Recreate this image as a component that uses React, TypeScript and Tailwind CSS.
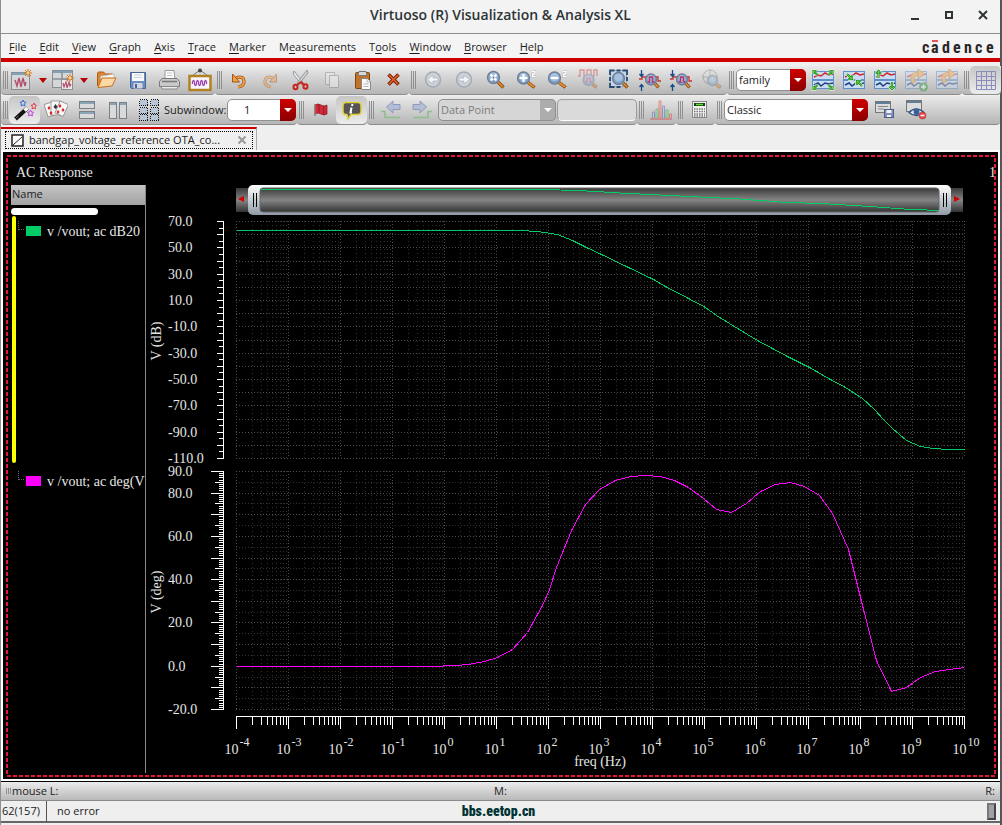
import type { ReactNode } from "react";

/* ---------- data ---------- */

const MENUS = [
  ["", "F", "ile"],
  ["", "E", "dit"],
  ["", "V", "iew"],
  ["", "G", "raph"],
  ["", "A", "xis"],
  ["", "T", "race"],
  ["", "M", "arker"],
  ["M", "e", "asurements"],
  ["T", "o", "ols"],
  ["", "W", "indow"],
  ["", "B", "rowser"],
  ["", "H", "elp"],
];

// [log10(freq), value]
const GAIN_DB = [
  [-4, 63.2], [1.45, 63.2], [1.78, 62.4], [2.17, 59.9], [2.46, 55.6], [2.74, 50.3], [3.01, 44.9],
  [4.01, 25.7], [4.25, 20.4], [4.7, 11.3], [5.02, 4.4], [5.24, -1.1], [5.48, -7.5], [5.82, -16.1],
  [6.01, -20.4], [6.3, -26.7], [6.59, -32.3], [7.01, -40.9], [7.42, -49.7], [7.71, -55.8],
  [8.03, -64.4], [8.26, -72.8], [8.45, -80.4], [8.62, -87.5], [8.88, -96.3], [9.15, -100.9],
  [9.4, -102.4], [9.7, -102.9], [10, -103.2],
];

const PHASE_DEG = [
  [-4, -0.3], [-0.27, -0.1], [0.23, 0.3], [0.46, 0.9], [0.76, 2], [1.02, 4], [1.31, 7.9], [1.6, 15.6],
  [1.88, 28.2], [2.01, 35.6], [2.16, 45.5], [2.44, 62.6], [2.71, 74.7], [2.99, 81.7], [3.28, 85.7],
  [3.57, 87.5], [3.87, 88], [4.15, 87.5], [4.42, 86], [4.69, 82.8], [4.98, 77.5], [5.24, 72.4],
  [5.52, 70.9], [5.81, 75.1], [6.08, 80.8], [6.36, 84], [6.65, 84.8], [6.92, 83.2], [7.21, 78.8],
  [7.47, 70.4], [7.77, 53.9], [8.04, 27.9], [8.31, 2.8], [8.6, -11.8], [8.88, -10], [9.16, -5.1],
  [9.44, -2.4], [9.72, -1.4], [10, -0.8],
];

/* ---------- icons ---------- */

const Svg = ({ children, faded, size = 24 }: { children: ReactNode; faded?: boolean; size?: number }) => (
  <svg width={size} height={size} viewBox="0 0 24 24" fill="none" className={faded ? "opacity-45" : ""}>
    {children}
  </svg>
);

const Spark = ({ x, y }: { x: number; y: number }) => (
  <g stroke="#d9751c" strokeWidth="1">
    <path d={`M${x - 4} ${y}h8M${x} ${y - 4}v8M${x - 3} ${y - 3}l6 6M${x + 3} ${y - 3}l-6 6`} />
    <circle cx={x} cy={y} r="1.5" fill="#ffd27a" stroke="none" />
  </g>
);

const NewWindowIcon = () => (
  <Svg>
    <rect x="1.5" y="4.5" width="18" height="17" fill="#d4d6d8" stroke="#8b8f94" />
    <path d="M2 6h17" stroke="#7fa3bd" strokeWidth="2" />
    <path d="M5 12l2 6 2-8 2 9 2-9 2 8 1-4" stroke="#b4506e" strokeWidth="1.4" />
    <Spark x={18} y={5} />
  </Svg>
);

const NewSubwindowIcon = () => (
  <Svg>
    <rect x="1.5" y="2.5" width="20" height="17" fill="#d4d6d8" stroke="#8b8f94" />
    <path d="M2 4h19" stroke="#7fa3bd" strokeWidth="2" />
    <path d="M2 11h19M11 4v15" stroke="#8b8f94" strokeWidth="1.5" />
    <rect x="10.5" y="11.5" width="11" height="10" fill="#ececec" stroke="#8b8f94" />
    <path d="M12 15l1 4 2-5 1 6 2-6 1 4 1-2" stroke="#b4506e" strokeWidth="1.2" />
    <Spark x={19} y={10} />
  </Svg>
);

const FolderIcon = () => (
  <Svg>
    <path d="M2.500 18V5l1-1h5l2 2h7v4" fill="#d98636" stroke="#b85c0c" />
    <path d="M6 8l13-2v5H5z" fill="#f6f6f6" stroke="#aaa" strokeWidth=".6" />
    <path d="M3 19.500l4-9.500h14l-4 8z" fill="#fbd9a4" stroke="#c76f1c" />
  </Svg>
);

const FloppyIcon = () => (
  <Svg>
    <path d="M4.500 4.500h15v16h-14l-1-1z" fill="#6b8cc0" stroke="#47659a" />
    <rect x="6" y="5" width="12" height="8" fill="#f7f8fa" />
    <path d="M8 7h8M8 9.500h8" stroke="#c4cad4" strokeWidth=".8" />
    <rect x="7.500" y="15" width="9" height="5.500" fill="#d2d6dc" />
    <rect x="9" y="16" width="2" height="4" fill="#47659a" />
  </Svg>
);

const PrinterIcon = () => (
  <Svg>
    <path d="M8 12V2.500h9l1 9.500" fill="#fafafa" stroke="#9a9a9a" />
    <path d="M10 5h5M10 7.500h5" stroke="#c5c5c5" />
    <path d="M5 10.500h15l2.500 3v5h-20v-5z" fill="#c9c9c9" stroke="#777" />
    <path d="M5 13.500h15" stroke="#777" strokeWidth="1.500" />
    <path d="M4 18.500h17l-1 2.500H5z" fill="#ececec" stroke="#888" />
  </Svg>
);

const FrameIcon = () => (
  <Svg>
    <path d="M4 8l8-6 8 6" stroke="#66717b" />
    <circle cx="12" cy="2.500" r="2" fill="#444" />
    <rect x="1.500" y="8" width="21" height="14" fill="#f7f4ff" stroke="#b08224" strokeWidth="2.500" />
    <path d="M4.500 16v-2q1-3 2 0v2q1 3 2 0v-2q1-3 2 0v2q1 3 2 0v-2q1-3 2 0v2q1 3 2 0v-2q1-3 2 0v2" stroke="#9b45b0" strokeWidth="1.300" />
  </Svg>
);

const UndoIcon = ({ flip }: { flip?: boolean }) => (
  <Svg faded={flip}>
    <g transform={flip ? "matrix(-1 0 0 1 24 0)" : undefined}>
      <path d="M9 10q8-3 8 4 0 4-6 5" stroke="#a85313" strokeWidth="3.200" />
      <path d="M9 10q8-3 8 4 0 4-6 5" stroke="#f0a04b" strokeWidth="1.800" />
      <path d="M5.500 6v8h7z" fill="#f0a04b" stroke="#a85313" />
    </g>
  </Svg>
);

const ScissorsIcon = () => (
  <Svg>
    <path d="M5 3l10 13-2 1L4 6z" fill="#e6e9ec" stroke="#84898e" strokeWidth=".8" />
    <path d="M18 2L8 15l2 1 9-11z" fill="#cdd1d5" stroke="#84898e" strokeWidth=".8" />
    <ellipse cx="6.500" cy="19" rx="2" ry="2.300" stroke="#c9251f" strokeWidth="2" />
    <ellipse cx="16.500" cy="18.500" rx="2" ry="2.300" stroke="#c9251f" strokeWidth="2" />
    <path d="M8 17l4-3 3 3" stroke="#c9251f" strokeWidth="2" />
  </Svg>
);

const CopyIcon = () => (
  <Svg faded>
    <path d="M5.500 4.500h9v12h-9z" fill="#eee" stroke="#888" />
    <path d="M9.500 7.500h9v12h-9z" fill="#f4f4f4" stroke="#888" />
  </Svg>
);

const PasteIcon = () => (
  <Svg>
    <rect x="4.500" y="4.500" width="14" height="16" rx="1" fill="#c2732a" stroke="#7d4311" />
    <path d="M8 3.500h7l1 4H7z" fill="#d9d9d9" stroke="#777" />
    <path d="M10.500 10.500h6l3 3v8h-9z" fill="#fafafa" stroke="#888" />
    <path d="M16 11v3h3M12.500 16h5M12.500 18.500h5" stroke="#b5b5b5" />
  </Svg>
);

const DeleteIcon = () => (
  <Svg>
    <path d="M6.500 6.500l10 10M16.500 6.500l-10 10" stroke="#7d2105" strokeWidth="3.600" />
    <path d="M7 7l9 9M16 7l-9 9" stroke="#e0612a" strokeWidth="1.600" />
  </Svg>
);

const NavIcon = ({ flip }: { flip?: boolean }) => (
  <Svg>
    <g transform={flip ? "matrix(-1 0 0 1 24 0)" : undefined}>
      <circle cx="12" cy="11.500" r="7.500" fill="#cdd2d8" stroke="#a3abb8" strokeWidth="1.500" />
      <path d="M6.500 11.500l5.500-4.500v3h5v3h-5v3z" fill="#f3f4f5" stroke="#a3abb5" strokeWidth=".6" />
    </g>
  </Svg>
);

const Lens = ({ x = 10.5, y = 9.5, r = 6 }: { x?: number; y?: number; r?: number }) => (
  <>
    <path d={`M${x + r - 1.5} ${y + r - 1.5}L20.500 19.500`} stroke="#8d4a0d" strokeWidth="3.400" />
    <path d={`M${x + r - 1.5} ${y + r - 1.5}L20 19`} stroke="#e8902f" strokeWidth="1.600" />
    <circle cx={x} cy={y} r={r} fill="#7fa0c4" stroke="#6c7f95" strokeWidth="1.300" />
    <circle cx={x} cy={y - 1} r={r - 2} fill="#a9c1dc" />
  </>
);

const ZoomFitIcon = () => (
  <Svg>
    <Lens />
    <path d="M7.500 6.500l6 6M13.500 6.500l-6 6" stroke="#fff" strokeWidth="2" />
    <path d="M9.500 9.500h2" stroke="#5e7fa8" strokeWidth="2" />
  </Svg>
);

const ZoomStepIcon = ({ plus }: { plus?: boolean }) => (
  <Svg>
    <Lens x={9.5} y={10} />
    <path d={plus ? "M5.500 10h8M9.500 6v8" : "M5.500 10h8"} stroke="#fff" strokeWidth="2.200" />
    <path d="M18 3.500h3v2.500h-2.500v2.500h3" stroke="#999" strokeWidth="2" />
    <path d="M18 3.500h3v2.500h-2.500v2.500h3" stroke="#fff" strokeWidth="1.400" />
  </Svg>
);

const ZoomDigitalIcon = () => (
  <Svg faded>
    <path d="M2 8h2V2h4v6h3V2h4v6h3V2h3v6" stroke="#cf3b3b" strokeWidth="1.300" />
    <Lens x={12.5} y={12} r={5.5} />
    <path d="M9 14h2v-4h3v4h2" stroke="#cf3b6b" strokeWidth="1.200" />
  </Svg>
);

const ZoomFrameIcon = () => (
  <Svg>
    <path d="M3.500 2.500h16v16h-16z" fill="#c9d6e6" stroke="#8fa9c6" />
    <path d="M3 7V2.500h4.500M9.500 2.500h4M15.500 2.500H20V7M20 9v4M3 9v4M3 15v4h4.500M9.500 19h4" stroke="#27496f" strokeWidth="1.800" />
    <Lens x={11.5} y={10.5} r={6} />
  </Svg>
);

const ZoomAxisIcon = () => (
  <Svg>
    <path d="M1 11h3V9h16v4h3" stroke="#c9302c" strokeWidth="1.300" />
    <Lens x={13} y={11.5} r={5.5} />
    <path d="M9.500 14h2v-5h3v5h2" stroke="#b3306a" strokeWidth="1.500" />
    <path d="M3.500 2v6M1.500 6l2 2.500 2-2.500M3.500 23v-6M1.500 19l2-2.500 2 2.500" stroke="#174a8c" strokeWidth="1.300" />
  </Svg>
);

const ZoomTargetIcon = () => (
  <Svg faded>
    <circle cx="10" cy="9" r="7" stroke="#777" />
    <path d="M10 1v16M2 9h16" stroke="#777" strokeWidth=".8" />
    <Lens x={12.5} y={12.5} r={5} />
  </Svg>
);

type Mode = "out" | "in" | "split" | "add" | "turn";

const ARROWS: Partial<Record<Mode, string>> = {
  out: "M6.500 7L3 3.500M17.500 7L21 3.500M6.500 17L3 20.500M17.500 17l3.500 3.500M2.500 6V3h3M21.500 6V3h-3M2.500 18v3h3M21.500 18v3h-3",
  in: "M5 6l5 5M20 18l-5-5M6 11h4V7M19 13h-4v4",
  split: "M5.500 10V3M3 5.500L5.500 3 8 5.500M19 14v7M16.500 18.500L19 21l2.500-2.500",
};

const WaveIcon = ({ mode }: { mode: Mode }) => {
  const arrows = ARROWS[mode];
  return (
    <Svg faded={!arrows}>
      <rect x="1.500" y="3.500" width="21" height="8" fill="#c9dcf3" stroke="#5f8fc9" />
      <rect x="1.500" y="12.500" width="21" height="8" fill="#c9dcf3" stroke="#5f8fc9" />
      <path d="M3 9l4-2 3 1 4-3 4 2 4-1" stroke="#d4252a" strokeWidth="1.500" />
      <path d="M3 17l4-2 3 3 4-3 4 1 4-1" stroke="#1d3f7d" strokeWidth="1.500" />
      {arrows ? (
        <>
          <path d={arrows} stroke="#e8f6e0" strokeWidth="3.600" />
          <path d={arrows} stroke="#1f8a1f" strokeWidth="2.200" />
          <path d={arrows} stroke="#7fdc5a" strokeWidth=".8" />
        </>
      ) : (
        <>
          <path d="M10 15q-5-10 5-9" stroke="#c9731a" strokeWidth="4" />
          <path d="M10 15q-5-10 5-9" stroke="#f0a850" strokeWidth="2.500" />
          <path d="M14 1l6 5-6 5z" fill="#f0a850" stroke="#c9731a" />
        </>
      )}
      {mode === "add" && (
        <>
          <circle cx="19.500" cy="19" r="4.500" fill="#2e9b3a" />
          <path d="M17 19h5M19.500 16.500v5" stroke="#fff" strokeWidth="1.500" />
        </>
      )}
    </Svg>
  );
};

const GridIcon = () => (
  <Svg>
    <path d="M2.500 3.500h19v18h-19zM7.500 3v19M12.500 3v19M17.500 3v19M2 8.500h20M2 12.500h20M2 17.500h20" stroke="#8b8dbd" />
  </Svg>
);

const WandIcon = () => (
  <Svg>
    <path d="M2.500 21L14.500 10" stroke="#111" strokeWidth="4" />
    <path d="M11.500 12.500l3-2.500" stroke="#fff" strokeWidth="3.500" />
    <path d="M2.500 20.500l3-2.500" stroke="#777" strokeWidth="1" />
    <path d="M10 2l1 2 2 .3-1.500 1.500.5 2-2-.8-2 .8.500-2L7 4.300 9 4z" stroke="#3a6ae0" />
    <path d="M21 5l1 2 1.500.3L22 8.800l.5 2-1.500-.8-2 .8.500-2L18 7.300 20 7z" stroke="#e03a4a" />
    <path d="M17.500 12l1 2 2 .3-1.500 1.500.5 2-2-.8-2 .8.500-2-1.500-1.500 2-.3z" stroke="#c23ae0" />
  </Svg>
);

const CardsIcon = () => (
  <Svg>
    <g fill="#f7f7f7" stroke="#8c8c8c" strokeWidth=".8">
      <rect x="2" y="5" width="9" height="13" transform="rotate(-18 6 12)" />
      <rect x="7" y="3" width="9" height="14" />
      <rect x="13" y="4" width="9" height="13" transform="rotate(24 17 11)" />
    </g>
    <path d="M5 8l1.500 2L5 12l-1.500-2z" fill="#d22" />
    <path d="M11.500 6l2 3-2 2-2-2z" fill="#333" />
    <path d="M16 6l1.500 2-1.500 2-1.500-2zM19 10l1.500 2-1.500 2-1.500-2zM14 12l1.500 2-1.500 2-1.500-2zM7 13l1.500 2L7 17l-1.500-2z" fill="#d22" />
  </Svg>
);

const RowsIcon = () => (
  <Svg>
    <rect x="4.500" y="3.500" width="15" height="7" fill="#d9dadb" stroke="#7c8084" />
    <rect x="4.500" y="13.500" width="15" height="7" fill="#d9dadb" stroke="#7c8084" />
    <path d="M5 5h14M5 15h14" stroke="#6f94ad" strokeWidth="1.500" />
  </Svg>
);

const ColsIcon = () => (
  <Svg>
    <rect x="3.500" y="4.500" width="7" height="16" fill="#d9dadb" stroke="#7c8084" />
    <rect x="13.500" y="4.500" width="7" height="16" fill="#d9dadb" stroke="#7c8084" />
    <path d="M4 6h6M14 6h6" stroke="#6f94ad" strokeWidth="1.500" />
  </Svg>
);

const TilesIcon = () => (
  <Svg>
    {[1.5, 9.5, 16.5].map((y) => (
      <g key={y} fill="#b9c6d8" stroke="#111" strokeDasharray="1 1" shapeRendering="crispEdges">
        <rect x="2.500" y={y} width="8" height="6" />
        <rect x="13.500" y={y} width="8" height="6" />
      </g>
    ))}
  </Svg>
);

const FlagIcon = () => (
  <Svg>
    <path d="M6 7q3-2 6 0t6 0v9q-3 2-6 0t-6 0z" fill="#cf2a3a" stroke="#8d1420" strokeWidth=".7" />
    <path d="M10 6v9M14.500 8v9" stroke="#a01824" />
    <path d="M6 6v12" stroke="#9a7a6a" strokeWidth="1.500" />
  </Svg>
);

const InfoIcon = () => (
  <Svg>
    <path
      d="M6 4.500h12q3 0 3 3v6q0 3-3 3h-7L8 21l-1-4.500H6q-3 0-3-3v-6q0-3 3-3z"
      fill="#555"
      stroke="#e0cf3a"
      strokeWidth="1.500"
    />
    <path d="M12.500 6l-.5 2M11.500 9.500l-1 5h1.500" stroke="#fff" strokeWidth="2" />
  </Svg>
);

const StepIcon = ({ flip }: { flip?: boolean }) => (
  <Svg>
    <g transform={flip ? "matrix(-1 0 0 1 24 0)" : undefined}>
      <path d="M7.500 9l6.500-6v3.500h7v5h-7V15z" fill="#b3bdd6" stroke="#8d9abb" />
      <path d="M2 13.500h4v6h15" stroke="#8bbf8b" strokeWidth="1.500" />
    </g>
  </Svg>
);

const HistogramIcon = () => (
  <Svg faded>
    <path d="M1 21h22" stroke="#d33" strokeWidth="1.500" />
    <path d="M3.500 20v-6h2v6M13.500 20V8h2v12" fill="#b4c4ee" stroke="#4363b5" />
    <path d="M7 20v-9h2v9M17 20v-8h2v8" fill="#8f8" stroke="#2c9b3a" />
    <path d="M10 20V3h2v17M20.500 20v-4h2v4" fill="#faa" stroke="#d33" />
  </Svg>
);

const CalculatorIcon = () => (
  <Svg>
    <rect x="4.500" y="3.500" width="14" height="16" fill="#f0f0ee" stroke="#888" />
    <rect x="6" y="5" width="11" height="3" fill="#173d12" />
    <path d="M8 6.500h7" stroke="#5be03a" strokeWidth="1.500" />
    <path d="M6 11h11M6 13.500h11M6 16h11M6 18h11" stroke="#777" strokeDasharray="1.500 1" strokeWidth="1.400" />
  </Svg>
);

const SaveViewIcon = () => (
  <Svg>
    <rect x="2.500" y="3.500" width="15" height="11" fill="#dcdcdc" stroke="#777" />
    <path d="M3 5h14" stroke="#5f7f98" strokeWidth="2" />
    <path d="M5 8.500h10M5 11h6" stroke="#888" />
    <rect x="11.500" y="11.500" width="9" height="8" fill="#8090b8" stroke="#4a5d8c" />
    <path d="M13.500 12h5v3h-5zM14 17h4v2h-4z" fill="#f2f2f2" />
  </Svg>
);

const HideViewIcon = () => (
  <Svg>
    <rect x="2.500" y="2.500" width="15" height="11" fill="#dcdcdc" stroke="#777" />
    <path d="M3 4h14" stroke="#5f7f98" strokeWidth="2" />
    <path d="M5 14.500q7-7 15 0-8 6-15 0z" fill="#eef2f8" stroke="#31507f" strokeWidth="1.300" />
    <circle cx="12.500" cy="14" r="3" fill="#37619c" />
    <circle cx="18.500" cy="17.500" r="3.500" fill="#dd4a4a" stroke="#b53232" strokeWidth=".6" />
    <path d="M16.500 17.500h4" stroke="#fff" strokeWidth="1.500" />
  </Svg>
);

/* ---------- toolbar pieces ---------- */

const Group = ({ children, grow }: { children: ReactNode; grow?: boolean }) => (
  <div
    className={`flex h-[29px] items-center rounded-b border-b border-[#8c8c8c] bg-gradient-to-b from-[#eaeaea] to-[#b6b6b6] ${
      grow ? "flex-1" : "shrink-0"
    }`}
  >
    <span className="ml-[2px] mr-px flex h-[18px] w-[5px] shrink-0 justify-between">
      <i className="w-px bg-[#909090]" />
      <i className="w-px bg-[#909090]" />
      <i className="w-px bg-[#909090]" />
    </span>
    {children}
  </div>
);

type ToolProps = { label: string; children: ReactNode; active?: boolean; disabled?: boolean };

const Tool = ({ label, children, active, disabled }: ToolProps) => (
  <button
    type="button"
    aria-label={label}
    disabled={disabled}
    className={`flex h-[28px] w-[31px] shrink-0 items-center justify-center rounded-[5px] ${
      active ? "bg-gradient-to-b from-[#c6c6c6] to-[#ececec]" : ""
    }`}
  >
    {children}
  </button>
);

const SplitTool = ({ label, children }: { label: string; children: ReactNode }) => (
  <div className="flex shrink-0 items-center">
    <button type="button" aria-label={label} className="flex w-[26px] justify-center">
      {children}
    </button>
    <button type="button" aria-label={`${label} options`} className="flex w-[15px] justify-center">
      <svg width="8" height="5" viewBox="0 0 8 5">
        <path d="M0 0h8L4 5z" fill="#b80000" />
      </svg>
    </button>
  </div>
);

type ComboProps = { id: string; value: string; width: string; pad?: string; disabled?: boolean };

const Combo = ({ id, value, width, pad = "pl-[2px]", disabled }: ComboProps) => (
  <div className={`relative mx-px h-[22px] shrink-0 ${width}`}>
    <select
      id={id}
      aria-label={id}
      disabled={disabled}
      className={`block h-full w-full appearance-none rounded-[5px] border border-[#8f8f8f] pr-4 text-[11px] leading-[18px] opacity-100 ${pad} ${
        disabled ? "bg-[#d6d6d6] text-[#7c7c7c]" : "bg-white text-[#1c1c1c]"
      }`}
    >
      <option>{value}</option>
    </select>
    <span
      className={`pointer-events-none absolute inset-y-0 right-0 flex w-4 items-center justify-center rounded-r-[5px] ${
        disabled ? "border-y border-r border-[#8f8f8f] bg-[#adadad]" : "bg-gradient-to-b from-[#d00000] to-[#8a0000]"
      }`}
    >
      <svg width="8" height="4" viewBox="0 0 8 4">
        <path d="M0 0h8L4 4z" fill="#fff" />
      </svg>
    </span>
  </div>
);

const ToolbarTop = () => (
  <div className="flex">
    <Group>
      <SplitTool label="New window"><NewWindowIcon /></SplitTool>
      <SplitTool label="New subwindow"><NewSubwindowIcon /></SplitTool>
      <Tool label="Open"><FolderIcon /></Tool>
      <Tool label="Save"><FloppyIcon /></Tool>
      <Tool label="Print"><PrinterIcon /></Tool>
      <Tool label="Save image"><FrameIcon /></Tool>
    </Group>
    <Group>
      <Tool label="Undo"><UndoIcon /></Tool>
      <Tool label="Redo" disabled><UndoIcon flip /></Tool>
      <Tool label="Cut"><ScissorsIcon /></Tool>
      <Tool label="Copy" disabled><CopyIcon /></Tool>
      <Tool label="Paste"><PasteIcon /></Tool>
      <Tool label="Delete"><DeleteIcon /></Tool>
    </Group>
    <Group>
      <Tool label="Previous view" disabled><NavIcon /></Tool>
      <Tool label="Next view" disabled><NavIcon flip /></Tool>
      <Tool label="Fit"><ZoomFitIcon /></Tool>
      <Tool label="Zoom in by 2"><ZoomStepIcon plus /></Tool>
      <Tool label="Zoom out by 2"><ZoomStepIcon /></Tool>
      <Tool label="Zoom digital" disabled><ZoomDigitalIcon /></Tool>
      <Tool label="Zoom area"><ZoomFrameIcon /></Tool>
      <Tool label="Zoom Y"><ZoomAxisIcon /></Tool>
      <Tool label="Zoom Y fit"><ZoomAxisIcon /></Tool>
      <Tool label="Zoom Smith" disabled><ZoomTargetIcon /></Tool>
    </Group>
    <Group>
      <Combo id="selection" value="family" width="w-[70px]" />
      <Tool label="Split all strips"><WaveIcon mode="out" /></Tool>
      <Tool label="Combine all"><WaveIcon mode="in" /></Tool>
      <Tool label="Split current strip"><WaveIcon mode="split" /></Tool>
      <Tool label="Add trace" disabled><WaveIcon mode="add" /></Tool>
      <Tool label="Reload trace" disabled><WaveIcon mode="turn" /></Tool>
    </Group>
    <Group grow>
      <Tool label="Grid" active><GridIcon /></Tool>
    </Group>
  </div>
);

const ToolbarBottom = () => (
  <div className="flex">
    <Group>
      <Tool label="Magic" active><WandIcon /></Tool>
      <Tool label="Card layout"><CardsIcon /></Tool>
      <Tool label="Horizontal layout"><RowsIcon /></Tool>
      <Tool label="Vertical layout"><ColsIcon /></Tool>
      <Tool label="Auto layout"><TilesIcon /></Tool>
      <label htmlFor="subwindow" className="w-[62px] whitespace-nowrap text-[11px]">Subwindow:</label>
      <Combo id="subwindow" value="1" width="w-[69px]" pad="pl-4" />
    </Group>
    <Group>
      <Tool label="Flag"><FlagIcon /></Tool>
      <Tool label="Info" active><InfoIcon /></Tool>
    </Group>
    <Group>
      <Tool label="Previous point" disabled><StepIcon /></Tool>
      <Tool label="Next point" disabled><StepIcon flip /></Tool>
      <Combo id="step-mode" value="Data Point" width="w-[118px]" disabled />
      <input
        aria-label="Step value"
        disabled
        className="h-[22px] w-[80px] rounded-[5px] border border-[#9c9c9c] border-b-white bg-[#dadada] px-1 text-[11px]"
      />
    </Group>
    <Group>
      <Tool label="Histogram" disabled><HistogramIcon /></Tool>
    </Group>
    <Group>
      <Tool label="Calculator"><CalculatorIcon /></Tool>
    </Group>
    <Group grow>
      <Combo id="workspace" value="Classic" width="w-[144px]" />
      <Tool label="Save workspace"><SaveViewIcon /></Tool>
      <Tool label="Hide assistants"><HideViewIcon /></Tool>
    </Group>
  </div>
);

/* ---------- legend ---------- */

const TraceItem = ({ color, name, active }: { color: string; name: string; active?: boolean }) => (
  <li className={`flex items-start overflow-hidden whitespace-nowrap pt-[3px] ${active ? "h-[247px]" : "h-[30px]"}`}>
    <span className={`-mt-[3px] ml-px mr-[2px] w-1 shrink-0 self-stretch rounded-sm ${active ? "bg-[#ffff00]" : ""}`} />
    <span className="mr-[2px] mt-[2px] h-[9px] w-[6px] shrink-0 border-b border-l border-dotted border-[#666]" />
    <span className={`mr-[6px] mt-[7px] h-[10px] w-[15px] shrink-0 ${color}`} />
    <span className="leading-[26px]">{name}</span>
  </li>
);

const Legend = () => (
  <aside className="flex w-[135px] shrink-0 flex-col overflow-hidden border-r border-[#8a8a8a] text-[14px] text-[#e6e6e6]">
    <div className="h-[20px] bg-gradient-to-b from-[#c4c4c4] to-[#a2a2a2] pl-px font-['Open_Sans','Noto_Sans',sans-serif] text-[11px] leading-[18px] text-[#222]">
      Name
    </div>
    <div className="mt-[3px] h-[7px] w-[87px] rounded-full bg-white" />
    <ul className="mt-px flex flex-col gap-[3px]">
      <TraceItem color="bg-[#00cc66]" name="v /vout; ac dB20" active />
      <TraceItem color="bg-[#ff00ff]" name="v /vout; ac deg(V" />
    </ul>
  </aside>
);

/* ---------- chart ---------- */

const LEFT = 90;
const RIGHT = 818;
const DECADE = 52;
const AXIS_X = 77;
const AXIS_Y = 531;
const DB = { top: 36, bottom: 273, max: 70, min: -110 };
const DEG = { top: 286, bottom: 524, max: 90, min: -20 };

type Strip = typeof DB;

const px = (d: number) => Math.round(LEFT + (d + 4) * DECADE) + 0.5;
const py = (s: Strip, v: number) => Math.round(s.top + ((s.max - v) / (s.max - s.min)) * (s.bottom - s.top)) + 0.5;
const range = (from: number, to: number, step: number) => {
  const out: number[] = [];
  for (let v = from; v <= to; v += step) out.push(v);
  return out;
};
const trace = (s: Strip, pts: number[][]) => pts.map(([d, v]) => `${px(d)},${py(s, v)}`).join(" ");

const DECADES = range(-4, 10, 1);
const MINORS = range(-4, 9, 1).flatMap((d) => range(2, 9, 1).map((n) => d + Math.log10(n)));

const StripGrid = ({ strip, step }: { strip: Strip; step: number }) => (
  <g strokeDasharray="1 2">
    {MINORS.map((d) => (
      <path key={d} d={`M${px(d)} ${strip.top}V${strip.bottom}`} stroke="#303030" strokeDasharray="1 3" />
    ))}
    {DECADES.map((d) => (
      <path key={d} d={`M${px(d)} ${strip.top}V${strip.bottom}`} stroke="#4c4c4c" />
    ))}
    {range(strip.min, strip.max, step).map((v) => (
      <path key={v} d={`M${LEFT} ${py(strip, v)}H${RIGHT}`} stroke={v % 10 === 0 ? "#4c4c4c" : "#303030"} />
    ))}
  </g>
);

const StripAxis = ({ strip, step, tick }: { strip: Strip; step: number; tick: (v: number) => number }) => (
  <g stroke="#fff">
    <path d={`M${AXIS_X + 0.5} ${strip.top}V${strip.bottom + 1}`} />
    {range(strip.min, strip.max, step).map((v) => (
      <path key={v} d={`M${AXIS_X - tick(v)} ${py(strip, v)}H${AXIS_X}`} />
    ))}
  </g>
);

const Overview = () => (
  <g>
    <defs>
      <linearGradient id="track" x2="0" y2="1">
        <stop stopColor="#3a3a3a" />
        <stop offset=".5" stopColor="#858585" />
        <stop offset="1" stopColor="#333" />
      </linearGradient>
      <linearGradient id="thumb" x2="0" y2="1">
        <stop stopColor="#fff" />
        <stop offset="1" stopColor="#8f9aa6" />
      </linearGradient>
    </defs>
    <rect x="90" y="3" width="727" height="24" fill="url(#track)" />
    <rect x="102" y="0" width="703" height="30" rx="5" fill="url(#thumb)" />
    <rect x="114" y="3" width="679" height="24" rx="3" fill="url(#track)" stroke="#666" />
    <path d="M107.500 8v14M110.500 8v14M797.500 8v14M800.500 8v14" stroke="#000" shapeRendering="crispEdges" />
    <path d="M98 11v6l-6-3zM808 11v6l6-3z" fill="#d40000" />
    <polyline
      points="115,4.500 395,4.500 433,5.500 474,8 514,10 554,12 594,14 634,17 684,19 724,21.500 758,24 792,25.500"
      fill="none"
      stroke="#00cc66"
      shapeRendering="crispEdges"
    />
  </g>
);

const Chart = () => (
  <svg
    viewBox="0 0 848 588"
    className="block min-w-0 flex-1 font-['Liberation_Serif',serif]"
    role="img"
    aria-label="AC response, gain and phase over frequency"
  >
    <Overview />
    <g shapeRendering="crispEdges" fill="none">
      <StripGrid strip={DB} step={10} />
      <StripGrid strip={DEG} step={5} />
      <StripAxis strip={DB} step={5} tick={(v) => (v % 10 === 0 ? 6 : 4)} />
      <StripAxis strip={DEG} step={1} tick={(v) => (v % 10 === 0 ? 12 : v % 5 === 0 ? 8 : 4)} />
      <g stroke="#fff">
        <path d={`M${LEFT} ${AXIS_Y + 0.5}H${RIGHT + 1}`} />
        {DECADES.map((d) => <path key={d} d={`M${px(d)} ${AXIS_Y}v13`} />)}
        {MINORS.map((d) => <path key={d} d={`M${px(d)} ${AXIS_Y}v9`} />)}
      </g>
      <polyline points={trace(DB, GAIN_DB)} stroke="#00cc66" />
      <polyline points={trace(DEG, PHASE_DEG)} stroke="#ff00ff" />
    </g>
    <g fill="#e6e6e6" fontSize="14">
      {range(-110, 70, 20).map((v) => (
        <text key={v} x="22" y={py(DB, v) + 4}>{v.toFixed(1)}</text>
      ))}
      {[90, 80, 60, 40, 20, 0, -20].map((v) => (
        <text key={v} x="22" y={py(DEG, v) + 4}>{v.toFixed(1)}</text>
      ))}
      {DECADES.map((d) => (
        <g key={d}>
          <text x={px(d) - 12} y="569">10</text>
          <text x={px(d) + 3} y="561" fontSize="12">{d}</text>
        </g>
      ))}
      <text transform="translate(15 156) rotate(-90)" textAnchor="middle">V (dB)</text>
      <text transform="translate(15 407) rotate(-90)" textAnchor="middle">V (deg)</text>
      <text x="454" y="581" textAnchor="middle">freq (Hz)</text>
    </g>
  </svg>
);

/* ---------- window ---------- */

const TitleBar = () => (
  <header className="grid h-[34px] grid-cols-[1fr_auto_1fr] items-center border-b border-[#8f8d8a] bg-[#f3f3f3] pb-1">
    <h1 className="col-start-2 text-[14px] font-semibold text-[#2e3436]">Virtuoso (R) Visualization &amp; Analysis XL</h1>
    <div className="flex justify-end gap-[18px] pr-[9px]">
      {["M4 12h8", "M5 5h6v6H5z", "M4 4l8 8M12 4l-8 8"].map((d, i) => (
        <button key={d} type="button" aria-label={["Minimize", "Maximize", "Close"][i]}>
          <svg width="16" height="16" viewBox="0 0 16 16" fill="none" stroke="#2e3436" strokeWidth="2">
            <path d={d} />
          </svg>
        </button>
      ))}
    </div>
  </header>
);

const MenuBar = () => (
  <nav className="flex h-[28px] items-center justify-between border-b-4 border-[#cc0000] bg-[#f4f4f4] pl-2 pr-[6px]">
    <div className="flex gap-[13px] pt-[2px] text-[11px]">
      {MENUS.map(([pre, key, post]) => (
        <button key={pre + key + post} type="button">
          {pre}<span className="underline underline-offset-2">{key}</span>{post}
        </button>
      ))}
    </div>
    <svg width="74" height="22" viewBox="0 0 74 22" aria-label="cadence">
      <text
        x="2 11 22 33 44 55 66"
        y="18"
        fontSize="16"
        fontWeight="700"
        fill="#2a2627"
        className="font-['Roboto_Condensed',Roboto,sans-serif]"
      >
        cadence
      </text>
      <path d="M12 6h6" stroke="#e01f2d" strokeWidth="1.500" />
    </svg>
  </nav>
);

const TabBar = () => (
  <div className="flex h-[25px] bg-[#efefef]">
    <div className="mt-[2px] flex w-[256px] border-r border-t-2 border-r-[#aaa] border-t-[#cc0000] pb-px pl-1 pr-[3px] pt-[2px]">
      <div className="flex flex-1 items-center border border-dotted border-black px-[5px] text-[11px]">
        <svg width="13" height="13" viewBox="0 0 13 13" className="mr-[5px]">
          <path d="M1 1h11v11H1z" fill="#fff" stroke="#222" strokeWidth="1.500" />
          <path d="M2 11l9-8" stroke="#222" />
        </svg>
        <button type="button" className="flex-1 truncate text-left">bandgap_voltage_reference OTA_co...</button>
        <button type="button" aria-label="Close tab">
          <svg width="10" height="10" viewBox="0 0 10 10" stroke="#999" strokeWidth="2">
            <path d="M1.500 1.500l7 7M8.500 1.500l-7 7" />
          </svg>
        </button>
      </div>
    </div>
  </div>
);

const PlotWindow = () => (
  <main className="border-2 border-white bg-black pb-[2px] pl-[3px] pr-[2px] pt-[3px] font-['Liberation_Serif',serif]">
    <div className="relative">
      <svg className="pointer-events-none absolute inset-0 h-full w-full" aria-hidden="true">
        <rect
          x="1"
          y="1"
          className="h-[calc(100%-2px)] w-[calc(100%-2px)]"
          fill="none"
          stroke="#e6183a"
          strokeWidth="2"
          strokeDasharray="4 2"
        />
      </svg>
      <div className="flex h-[30px] items-center justify-between pl-[10px] pt-1 text-[14px] text-[#e6e6e6]">
        <h2>AC Response</h2>
        <span>1</span>
      </div>
      <div className="flex pb-1 pl-[5px] pr-[2px]">
        <Legend />
        <Chart />
      </div>
    </div>
  </main>
);

export default function App() {
  return (
    <div className="flex min-h-screen flex-col border-l border-r-2 border-l-[#8f8f8f] border-r-[#555] bg-[#efefef] font-['Open_Sans','Noto_Sans',sans-serif] text-[#1c1c1c]">
      <TitleBar />
      <MenuBar />
      <div className="flex flex-col gap-px pt-1">
        <ToolbarTop />
        <ToolbarBottom />
      </div>
      <TabBar />
      <PlotWindow />
      <div className="grid h-[20px] grid-cols-[1fr_auto_1fr] items-center border-b border-t border-b-[#8a8a8a] border-t-black bg-gradient-to-b from-[#ececec] to-[#b8b8b8] px-[5px] text-[11px]">
        <span className="flex items-center">
          <span className="mr-px flex h-[6px] w-[5px] justify-between">
            <i className="w-px bg-[#909090]" />
            <i className="w-px bg-[#909090]" />
            <i className="w-px bg-[#909090]" />
          </span>
          mouse L:
        </span>
        <span>M:</span>
        <span className="text-right">R:</span>
      </div>
      <footer className="grid h-[22px] grid-cols-[1fr_auto_1fr] items-center border-b-2 border-[#666] pr-[4px] text-[11px]">
        <div className="flex items-center self-stretch">
          <span className="flex w-[46px] items-center self-stretch border-r border-[#555] pl-px">62(157)</span>
          <span className="pl-[10px]">no error</span>
        </div>
        <span className="font-['Roboto_Condensed',Roboto,sans-serif] text-[14px] font-black text-[#003333]">bbs.eetop.cn</span>
        <span className="h-[17px] w-[9px] justify-self-end border-2 border-[#777] border-b-[#444] border-r-[#444] bg-[#9f9fa5]" />
      </footer>
    </div>
  );
}
